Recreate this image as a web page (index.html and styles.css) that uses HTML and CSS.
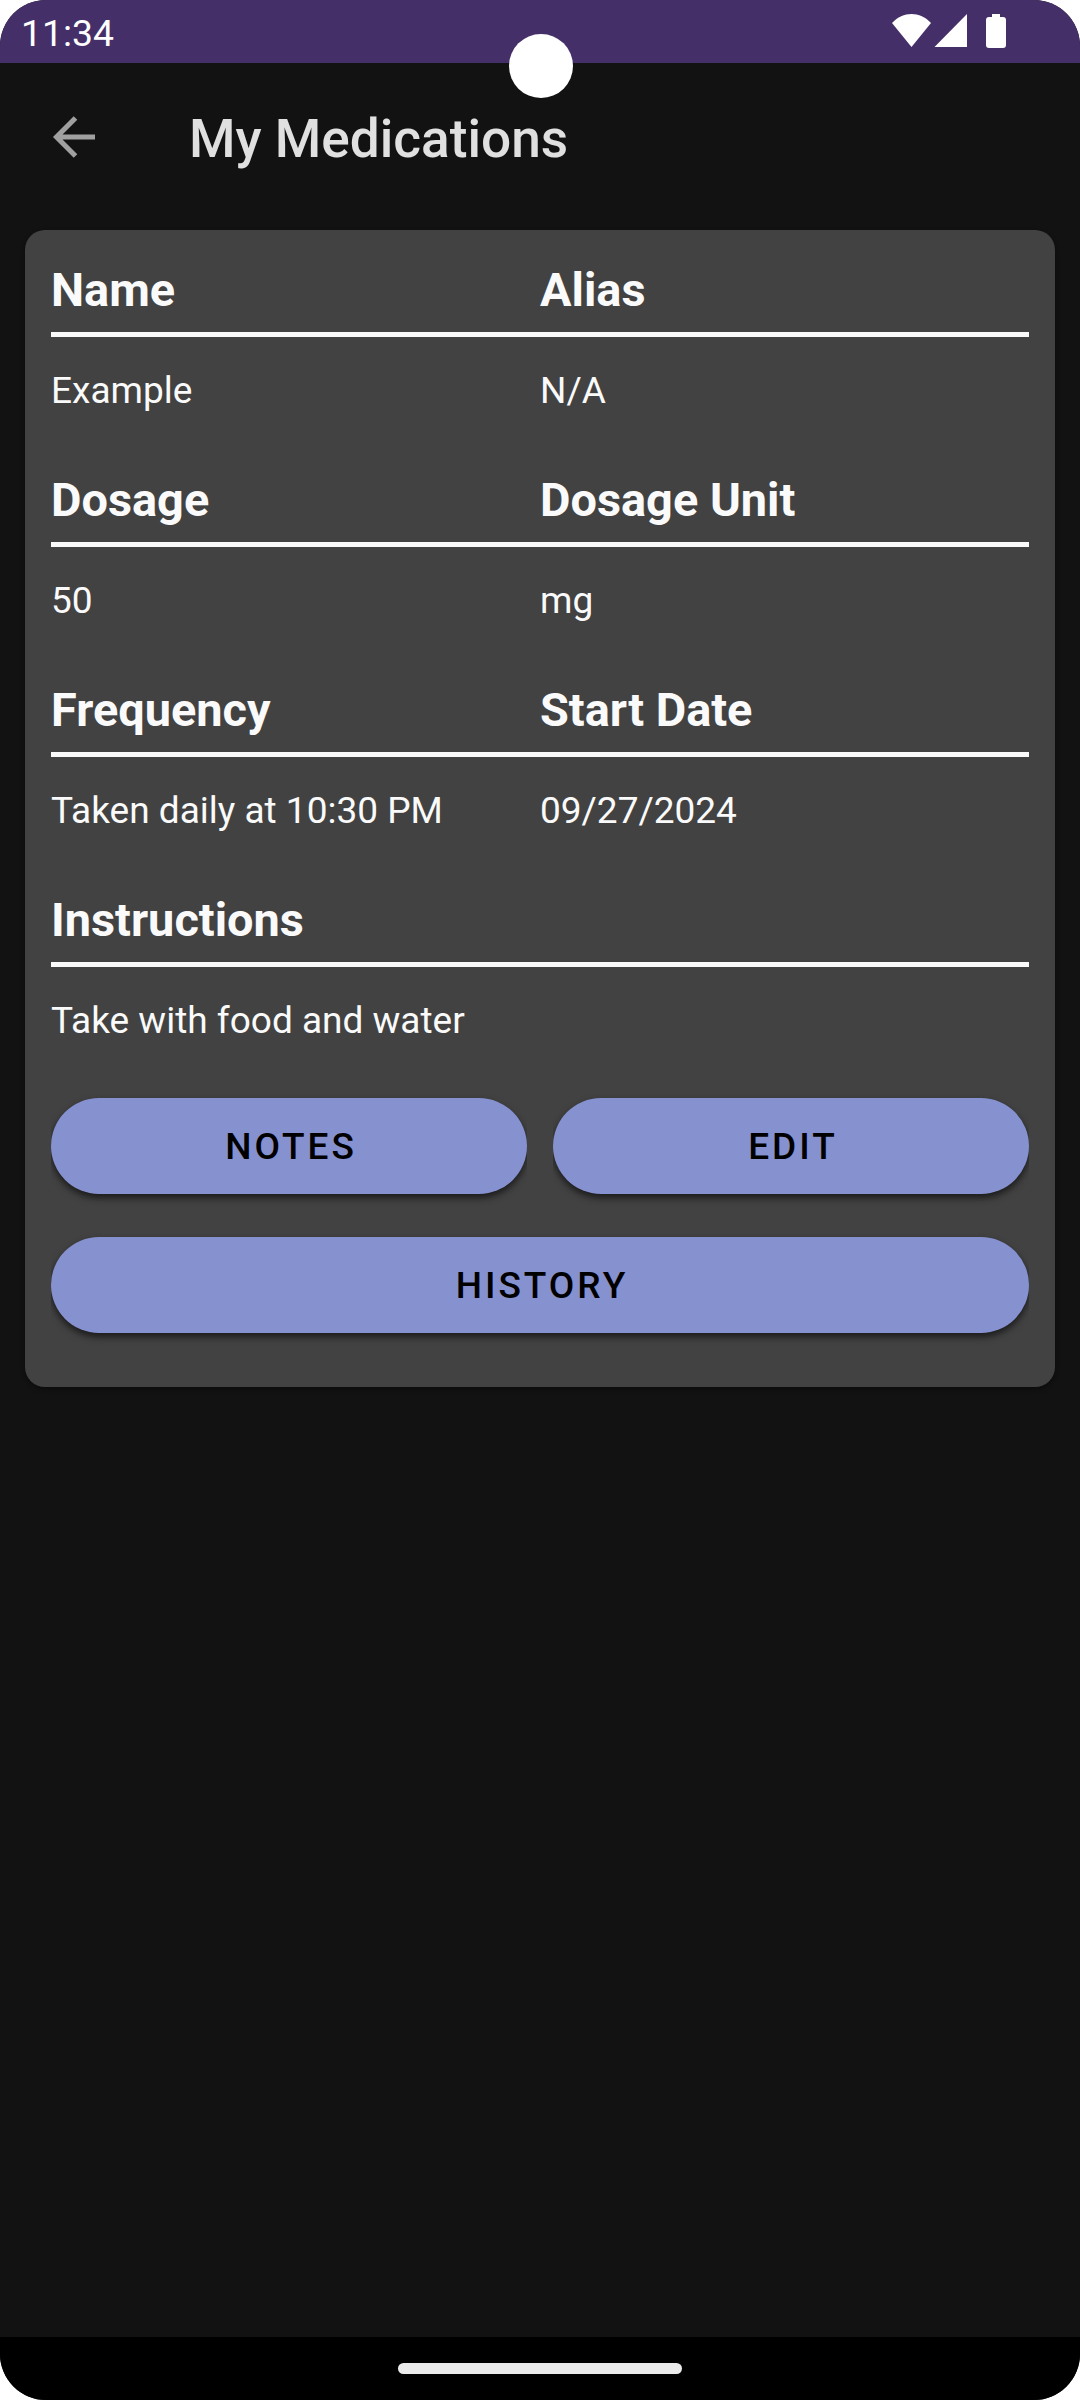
FILE: index.html
```html
<!DOCTYPE html>
<html lang="en">
<head>
<meta charset="utf-8">
<title>My Medications</title>
<link rel="stylesheet" href="styles.css">
</head>
<body>
<div class="phone">
  <header class="status">
    <span class="clock">11:34</span>
    <svg class="status-icons" width="116" height="36" viewBox="0 0 116 36" fill="#fff">
      <path d="M0 9C11-3 28-3 39 9L19.500 33Z"/>
      <path d="M42.500 33H75V0Z"/>
      <path d="M100 0h8v3h3q3 0 3 3v25q0 3-3 3h-14q-3 0-3-3V6q0-3 3-3h3z"/>
    </svg>
  </header>
  <div class="camera"></div>
  <div class="toolbar">
    <svg class="back" width="44" height="44" viewBox="0 0 44 44" fill="none" stroke="#a0a0a0" stroke-width="5"><path d="M43 22H5M23.500 3L4.500 22L23.500 41"/></svg>
    <h1>My Medications</h1>
  </div>
  <main class="card">
    <dl class="row"><dt>Name</dt><dt>Alias</dt><dd>Example</dd><dd>N/A</dd></dl>
    <dl class="row"><dt>Dosage</dt><dt>Dosage Unit</dt><dd>50</dd><dd>mg</dd></dl>
    <dl class="row"><dt>Frequency</dt><dt>Start Date</dt><dd>Taken daily at 10:30 PM</dd><dd>09/27/2024</dd></dl>
    <dl class="row single"><dt>Instructions</dt><dd>Take with food and water</dd></dl>
    <div class="actions"><button>NOTES</button><button>EDIT</button><button class="wide">HISTORY</button></div>
  </main>
  <footer class="nav"><span class="handle"></span></footer>
</div>
</body>
</html>
```
FILE: styles.css
```css
* { box-sizing: border-box; margin: 0; padding: 0; }
body { width: 1080px; height: 2400px; background: #fff; font-family: Roboto, sans-serif; color: #fafafa; }
.phone { position: relative; display: flex; flex-direction: column; height: 2400px; background: #121212; border-radius: 46px; overflow: hidden; }
.status { display: flex; justify-content: space-between; height: 63px; padding: 0 72px 0 21px; background: #452f68; color: #fff; }
.clock { font-size: 37.3px; line-height: 67px; }
.status-icons { margin-top: 14px; }
.camera { position: absolute; left: 509px; top: 34px; width: 64px; height: 64px; border-radius: 50%; background: #fff; }
.toolbar { display: flex; align-items: center; height: 147px; padding-left: 52px; }
h1 { margin-left: 93px; padding-top: 4px; font-size: 53.2px; font-weight: 500; line-height: 62px; color: #e0e0e0; }
.card { margin: 20px 25px 0; height: 1157px; padding: 26px 26px 0; background: #424242; border-radius: 20px; box-shadow: 0 2px 5px rgba(0,0,0,.4); }
.row { display: grid; grid-template-columns: 1fr 1fr; height: 210px; align-content: start; }
.single { grid-template-columns: 1fr; }
dt { height: 81px; border-bottom: 5px solid #fafafa; font-size: 46.9px; font-weight: 700; line-height: 68px; }
dd { padding-top: 26px; font-size: 37px; line-height: 56px; }
.actions { display: grid; grid-template-columns: 1fr 1fr; gap: 43px 26px; padding-top: 2px; }
button { height: 96px; padding: 1px 0 0 4px; border: 0; border-radius: 48px; background: #8691d0; color: #000; font: 500 37px Roboto, sans-serif; letter-spacing: 3px; box-shadow: 0 4px 7px rgba(0,0,0,.6); clip-path: inset(-4px 0 -14px 0); }
.wide { grid-column: 1 / -1; }
.nav { display: flex; align-items: center; justify-content: center; height: 63px; margin-top: auto; background: #000; }
.handle { width: 284px; height: 11px; border-radius: 5.5px; background: #ebebeb; }
```
